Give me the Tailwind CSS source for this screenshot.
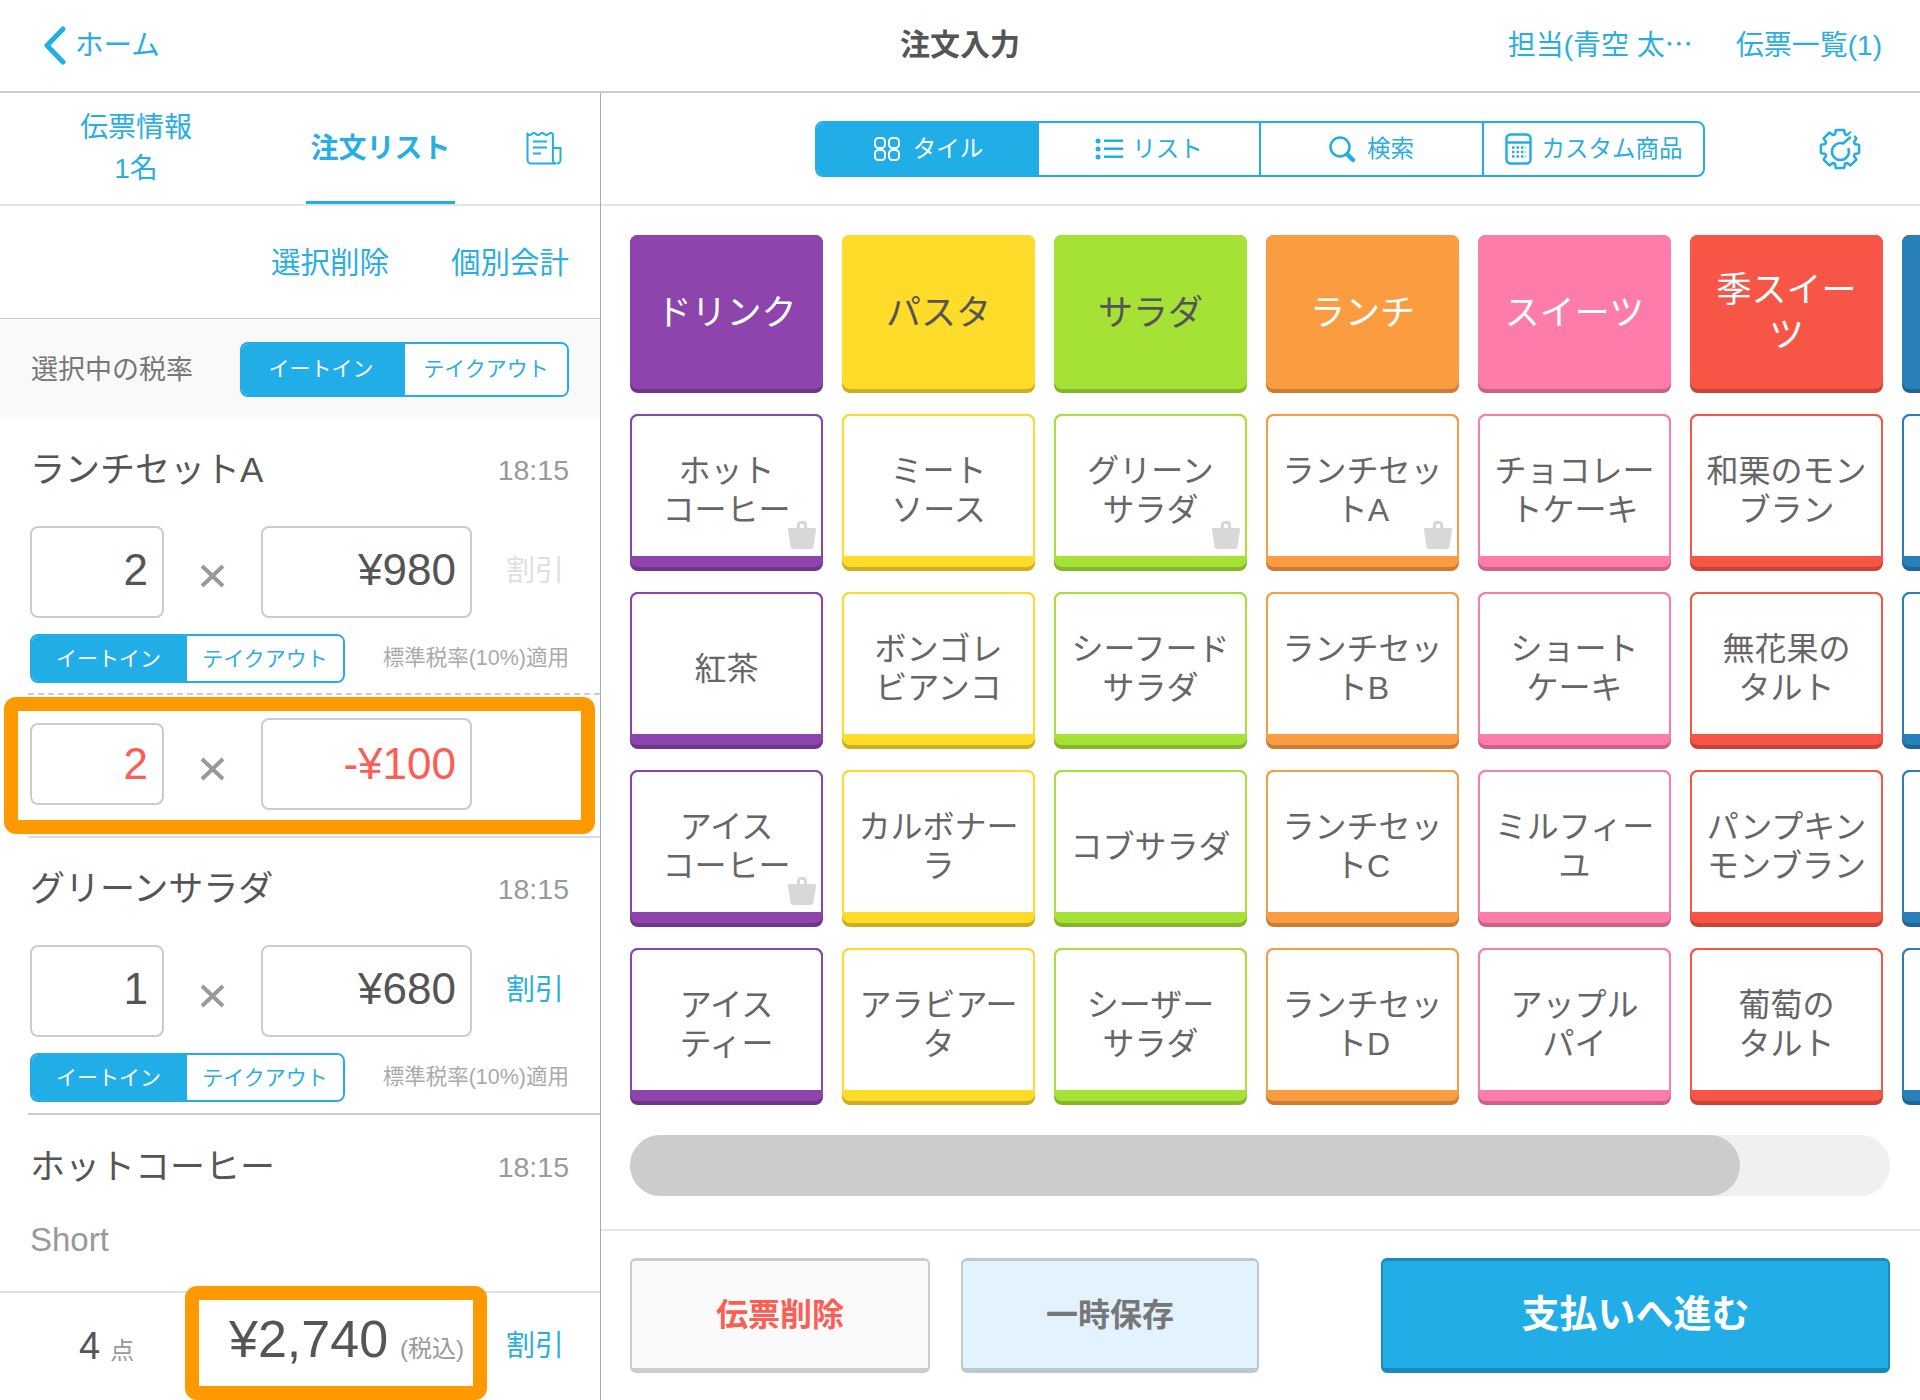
<!DOCTYPE html>
<html lang="ja">
<head>
  <meta charset="UTF-8" />
  <title>注文入力</title>
  <script src="https://cdn.jsdelivr.net/npm/@tailwindcss/browser@4"></script>
</head>
<body class="w-[1920px] h-[1400px] overflow-hidden bg-white text-[#555] font-['Liberation_Sans','Noto_Sans_CJK_JP',sans-serif]">

  <!-- top bar -->
  <header class="h-[93px] border-b-2 border-[#ccc] flex items-center justify-between pl-[44px] pr-[38px] relative text-[#29aee3] text-[28px]">
    <a class="flex items-center gap-[9px] text-[28.500px]">
      <svg class="w-[22px] h-[39px]" viewBox="0 0 22 39" fill="none" stroke="#21aee6" stroke-width="5" stroke-linecap="round" stroke-linejoin="round"><path d="M19 3 3 19.5 19 36"/></svg>
      <span>ホーム</span>
    </a>
    <h1 class="absolute left-[900px] w-[120px] pb-[2px] text-center text-[#555] text-[30px] font-bold whitespace-nowrap">注文入力</h1>
    <div class="flex items-baseline gap-[43px] pb-[2px] whitespace-nowrap">
      <span>担当(青空 太<span class="font-['Noto_Sans_CJK_JP']">…</span></span>
      <span>伝票一覧(1)</span>
    </div>
  </header>

  <div class="flex h-[1307px]">
    <!-- order list -->
    <aside class="w-[601px] shrink-0 border-r border-[#aaa] flex flex-col">
      <div class="h-[113px] shrink-0 border-b-2 border-[#e4e4e4] flex text-[#29aee3] text-[28px]">
        <div class="w-[272px] text-center leading-[41px] pt-[14px]">伝票情報<br>1名</div>
        <div class="ml-[34px] w-[149px] h-[111px] border-b-[3px] border-[#21aee6] flex items-center justify-center font-bold pt-[3px]">注文リスト</div>
        <div class="ml-[71px] pt-[39px]">
          <svg class="w-[36px] h-[33px]" viewBox="0 0 36 33" fill="none" stroke="#21aee6" stroke-width="2"><path d="M1.500 2q2.100 2 4.200 0t4.200 0 4.200 0 4.200 0 4.200 0 4.400 0V28a3.500 3.500 0 0 0 3.500 3.500H5a3.500 3.500 0 0 1-3.500-3.500zM26.700 16H34.500V28a3.500 3.500 0 0 1-3.500 3.500"/><path d="M7 9.500H21M7 15.500H21M7 21.500H15"/></svg>
        </div>
      </div>
      <div class="h-[113px] shrink-0 border-b border-[#ccc] flex items-center justify-end gap-[62px] pr-[31px] pt-[2px] text-[#29aee3] text-[29.500px]">
        <span>選択削除</span>
        <span>個別会計</span>
      </div>
      <div class="h-[98px] shrink-0 bg-[#f9f9f9] flex items-center justify-between pl-[31px] pr-[31px] pt-[2px]">
        <span class="text-[27px] text-[#777] pt-[2px]">選択中の税率</span>
        <div class="w-[329px] h-[55px] flex border-2 border-[#21aee6] rounded-[8px] overflow-hidden text-[21px]">
          <span class="w-[163px] pr-[5px] bg-[#21aee6] text-white flex items-center justify-center">イートイン</span>
          <span class="flex-1 bg-white text-[#29aee3] flex items-center justify-center">テイクアウト</span>
        </div>
      </div>

      <!-- lunch set A -->
      <div class="h-[109px] shrink-0 flex items-center justify-between pl-[30px] pr-[31px] pb-[3px]">
        <span class="text-[35px]">ランチセットA</span>
        <span class="text-[28.500px] text-[#999]">18:15</span>
      </div>
      <div class="h-[92px] shrink-0 flex items-center pl-[30px]">
        <div class="w-[134px] h-[92px] border-2 border-[#ccc] rounded-[8px] flex items-center justify-end pr-[14px] pb-[4px] text-[44px]">2</div>
        <div class="w-[97px] flex justify-center pt-[8px]">
          <svg class="w-[25px] h-[24px]" viewBox="0 0 25 24" stroke="#999" stroke-width="4"><path d="M2 2 23 22M23 2 2 22"/></svg>
        </div>
        <div class="w-[211px] h-[92px] border-2 border-[#ccc] rounded-[8px] flex items-center justify-end pr-[14px] pb-[4px] text-[44px]">¥980</div>
        <span class="ml-[34px] text-[29px] text-[#e0e0e0]">割引</span>
      </div>
      <div class="h-[49px] mt-[16px] shrink-0 flex items-center pl-[30px] pr-[31px] justify-between">
        <div class="w-[315px] h-[49px] flex border-2 border-[#21aee6] rounded-[8px] overflow-hidden text-[21px]">
          <span class="w-[155px] pr-[2px] bg-[#21aee6] text-white flex items-center justify-center">イートイン</span>
          <span class="flex-1 bg-white text-[#29aee3] flex items-center justify-center">テイクアウト</span>
        </div>
        <span class="text-[21.500px] text-[#aaa] whitespace-nowrap">標準税率(10%)適用</span>
      </div>
      <div class="ml-[28px] mt-[10px] shrink-0 border-b-2 border-dashed border-[#ccc]"></div>

      <!-- discount row, highlighted -->
      <div class="h-[143px] shrink-0 relative ml-[28px] border-b-2 border-[#ddd]">
        <div class="flex items-center h-[141px] pl-[2px] pb-[4px]">
          <div class="w-[134px] h-[82px] border-2 border-[#ccc] rounded-[8px] flex items-center justify-end pr-[14px] text-[44px] text-[#fb5e55]">2</div>
          <div class="w-[97px] flex justify-center pt-[10px]">
            <svg class="w-[25px] h-[24px]" viewBox="0 0 25 24" stroke="#999" stroke-width="4"><path d="M2 2 23 22M23 2 2 22"/></svg>
          </div>
          <div class="w-[211px] h-[92px] border-2 border-[#ccc] rounded-[8px] flex items-center justify-end pr-[14px] text-[44px] text-[#fb5e55]">-¥100</div>
        </div>
        <div class="absolute left-[-24px] top-[2px] w-[591px] h-[137px] border-[14px] border-[#ff9900] rounded-[12px]"></div>
      </div>

      <!-- green salad -->
      <div class="h-[107px] shrink-0 flex items-center justify-between pl-[30px] pr-[31px] pb-[4px]">
        <span class="text-[35px]">グリーンサラダ</span>
        <span class="text-[28.500px] text-[#999]">18:15</span>
      </div>
      <div class="h-[92px] shrink-0 flex items-center pl-[30px]">
        <div class="w-[134px] h-[92px] border-2 border-[#ccc] rounded-[8px] flex items-center justify-end pr-[14px] pb-[4px] text-[44px]">1</div>
        <div class="w-[97px] flex justify-center pt-[10px]">
          <svg class="w-[25px] h-[24px]" viewBox="0 0 25 24" stroke="#999" stroke-width="4"><path d="M2 2 23 22M23 2 2 22"/></svg>
        </div>
        <div class="w-[211px] h-[92px] border-2 border-[#ccc] rounded-[8px] flex items-center justify-end pr-[14px] pb-[4px] text-[44px]">¥680</div>
        <span class="ml-[34px] text-[29px] text-[#29aee3]">割引</span>
      </div>
      <div class="h-[49px] mt-[16px] shrink-0 flex items-center pl-[30px] pr-[31px] justify-between">
        <div class="w-[315px] h-[49px] flex border-2 border-[#21aee6] rounded-[8px] overflow-hidden text-[21px]">
          <span class="w-[155px] pr-[2px] bg-[#21aee6] text-white flex items-center justify-center">イートイン</span>
          <span class="flex-1 bg-white text-[#29aee3] flex items-center justify-center">テイクアウト</span>
        </div>
        <span class="text-[21.500px] text-[#aaa] whitespace-nowrap">標準税率(10%)適用</span>
      </div>
      <div class="ml-[28px] mt-[11px] shrink-0 border-b-2 border-[#ccc]"></div>

      <!-- hot coffee -->
      <div class="h-[104px] shrink-0 flex items-center justify-between pl-[30px] pr-[31px]">
        <span class="text-[35px]">ホットコーヒー</span>
        <span class="text-[28.500px] text-[#999]">18:15</span>
      </div>
      <div class="h-[42px] shrink-0 mb-[30px] flex items-center pl-[30px] text-[33px] text-[#999]">Short</div>

      <!-- totals -->
      <div class="h-[109px] shrink-0 border-t-2 border-[#e0e0e0] flex items-center">
        <div class="w-[185px] pl-[79px] flex items-baseline gap-[10px]">
          <span class="text-[38px]">4</span>
          <span class="text-[24px] text-[#999]">点</span>
        </div>
        <div class="w-[302px] h-[114px] -mt-[7px] self-start relative border-[14px] border-[#ff9900] rounded-[12px] bg-white flex items-baseline pl-[30px] whitespace-nowrap">
          <span class="text-[52px]">¥2,740</span>
          <span class="ml-[12px] text-[24px] text-[#999]">(税込)</span>
        </div>
        <span class="ml-[19px] text-[29px] text-[#29aee3]">割引</span>
      </div>
    </aside>

    <!-- products -->
    <main class="flex-1 min-w-0 flex flex-col overflow-hidden">
      <div class="h-[113px] shrink-0 border-b-2 border-[#e4e4e4] flex items-center pl-[214px] pt-[1px]">
        <div class="w-[890px] h-[56px] flex border-2 border-[#21aee6] rounded-[8px] overflow-hidden text-[23.500px] text-[#29aee3]">
          <div class="w-[222px] bg-[#21aee6] text-white flex items-center justify-center gap-[12px]">
            <svg class="w-[28px] h-[26px]" viewBox="0 0 28 26" fill="none" stroke="#fff" stroke-width="2"><rect x="2" y="2" width="10" height="10" rx="3.500"/><rect x="16" y="2" width="10" height="10" rx="3.500"/><rect x="2" y="14" width="10" height="10" rx="3.500"/><rect x="16" y="14" width="10" height="10" rx="3.500"/></svg>
            <span class="pt-[2px]">タイル</span>
          </div>
          <div class="w-[222px] border-r-2 border-[#21aee6] flex items-center justify-center gap-[9px]">
            <svg class="w-[28px] h-[22px]" viewBox="0 0 28 22" fill="#21aee6"><circle cx="3" cy="3" r="2.500"/><circle cx="3" cy="11" r="2.500"/><circle cx="3" cy="19" r="2.500"/><rect x="9" y="1.500" width="19" height="2.500"/><rect x="9" y="9.500" width="19" height="2.500"/><rect x="9" y="17.500" width="19" height="2.500"/></svg>
            <span class="pt-[2px]">リスト</span>
          </div>
          <div class="w-[223px] border-r-2 border-[#21aee6] flex items-center justify-center gap-[11px]">
            <svg class="w-[27px] h-[27px]" viewBox="0 0 27 27" fill="none" stroke="#21aee6"><circle cx="11" cy="11" r="9.500" stroke-width="2.500"/><path d="M18.500 18.500 24 24" stroke-width="4.500" stroke-linecap="round"/></svg>
            <span class="pt-[2px]">検索</span>
          </div>
          <div class="flex-1 flex items-center justify-center gap-[10px] whitespace-nowrap">
            <svg class="w-[27px] h-[32px]" viewBox="0 0 27 32" fill="none"><rect x="1.500" y="1.500" width="24" height="29" rx="4" stroke="#21aee6" stroke-width="2.500"/><path d="M1.500 9.500H25.500" stroke="#21aee6" stroke-width="2.500"/><path d="M7 14.500H21M7 19H21M7 23.500H21" stroke="#21aee6" stroke-width="2.500" stroke-dasharray="2.500 2"/></svg>
            <span class="pt-[2px]">カスタム商品</span>
          </div>
        </div>
        <svg class="ml-[114px] w-[42px] h-[42px]" viewBox="0 0 42 42" fill="none" stroke="#21aee6" stroke-width="2.500" stroke-linecap="round" stroke-linejoin="round">
          <path id="gear" d=""/>
          <path d="M33 7 29 14" stroke="#fff" stroke-width="5"/>
          <path d="M24 15.500A8.500 8.500 0 1 0 29.500 21M24 15.500 31 9.500"/>
        </svg>
      </div>

      <div class="flex-1 min-h-0 pl-[29px]">
        <div id="tiles" class="grid grid-cols-[repeat(7,193px)] grid-rows-[158px_repeat(4,157px)] gap-x-[19px] gap-y-[21px] pt-[29px]"></div>
        <div class="w-[1260px] h-[61px] mt-[30px] bg-[#f0f0f0] rounded-full">
          <div class="w-[1110px] h-[61px] bg-[#ccc] rounded-full"></div>
        </div>
      </div>

      <div class="h-[171px] shrink-0 border-t-2 border-[#e4e4e4] flex pl-[29px] pt-[27px] text-[32px] font-bold">
        <button class="w-[300px] h-[115px] bg-[#fafafa] border-2 border-t-[3px] border-b-[5px] border-[#ccc] rounded-[6px] text-[#fb5e55]">伝票削除</button>
        <button class="ml-[31px] w-[298px] h-[115px] bg-[#e3f3fd] border-2 border-t-[3px] border-b-[5px] border-[#bcc9d4] rounded-[6px] text-[#777]">一時保存</button>
        <button class="ml-[122px] w-[509px] h-[115px] bg-[#21aee6] border-2 border-t-[3px] border-b-[5px] border-[#1c8ab8] rounded-[6px] text-white text-[38px]">支払いへ進む</button>
      </div>
    </main>
  </div>

  <script>
    // one entry per column: category first, then its products
    const columns = [
      { cat: 'bg-[#8e44ad] text-white', border: 'border-[#8e44ad]', dark: 'bg-[#6f3589]', name: 'ドリンク',
        items: [['ホット<br>コーヒー', true], ['紅茶'], ['アイス<br>コーヒー', true], ['アイス<br>ティー']] },
      { cat: 'bg-[#ffdb2a] text-[#555]', border: 'border-[#ffdb2a]', dark: 'bg-[#ccaf22]', name: 'パスタ',
        items: [['ミート<br>ソース'], ['ボンゴレ<br>ビアンコ'], ['カルボナー<br>ラ'], ['アラビアー<br>タ']] },
      { cat: 'bg-[#a6e236] text-[#555]', border: 'border-[#a6e236]', dark: 'bg-[#85b52b]', name: 'サラダ',
        items: [['グリーン<br>サラダ', true], ['シーフード<br>サラダ'], ['コブサラダ'], ['シーザー<br>サラダ']] },
      { cat: 'bg-[#fb9c41] text-white', border: 'border-[#fb9c41]', dark: 'bg-[#c97d34]', name: 'ランチ',
        items: [['ランチセッ<br>トA', true], ['ランチセッ<br>トB'], ['ランチセッ<br>トC'], ['ランチセッ<br>トD']] },
      { cat: 'bg-[#fd7ca9] text-white', border: 'border-[#fd7ca9]', dark: 'bg-[#ca6387]', name: 'スイーツ',
        items: [['チョコレー<br>トケーキ'], ['ショート<br>ケーキ'], ['ミルフィー<br>ユ'], ['アップル<br>パイ']] },
      { cat: 'bg-[#f75646] text-white', border: 'border-[#f75646]', dark: 'bg-[#c64538]', name: '季スイー<br>ツ',
        items: [['和栗のモン<br>ブラン'], ['無花果の<br>タルト'], ['パンプキン<br>モンブラン'], ['葡萄の<br>タルト']] },
      { cat: 'bg-[#2980b9] text-white', border: 'border-[#2980b9]', dark: 'bg-[#206694]', name: '',
        items: [[''], [''], [''], ['']] }
    ];

    const bag = `<svg class="absolute right-[7px] bottom-[22px] w-[28px] h-[29px]" viewBox="0 0 28 29" fill="#d8d8d8"><path d="M9 9V5a4 4 0 0 1 4-4h2a4 4 0 0 1 4 4v4h-3V5a1 1 0 0 0-1-1h-2a1 1 0 0 0-1 1v4z"/><path d="M2 8h24a2 2 0 0 1 2 2.300L25.500 26a3 3 0 0 1-3 3h-17a3 3 0 0 1-3-3L0 10.300A2 2 0 0 1 2 8z"/></svg>`;

    const tiles = document.getElementById('tiles');
    tiles.style.gridAutoFlow = 'column';
    tiles.innerHTML = columns.map(col => `
      <div class="${col.dark} rounded-[8px] pb-[4px]">
        <div class="${col.cat} h-full rounded-[8px] flex items-center justify-center text-center text-[35px] leading-[45px]">${col.name}</div>
      </div>
      ${col.items.map(([label, takeout]) => `
        <div class="${col.dark} relative rounded-[8px] pb-[4px]">
          <div class="${col.border} h-full bg-white border-2 border-b-[11px] rounded-[8px] flex items-center justify-center text-center text-[#666] text-[32px] leading-[39px] pt-[10px]">${label}</div>
          ${takeout ? bag : ''}
        </div>`).join('')}
    `).join('');

    // 8 tooth gear outline
    const pts = [];
    for (let i = 0; i < 8; i++) {
      const a = i * 45 - 90;
      [[-12, 19.5], [12, 19.5], [19, 15.5], [26, 15.5]].forEach(([o, r]) => {
        pts.push((21 + r * Math.cos((a + o) * Math.PI / 180)).toFixed(1) + ' ' + (21 + r * Math.sin((a + o) * Math.PI / 180)).toFixed(1));
      });
    }
    document.getElementById('gear').setAttribute('d', 'M' + pts.join('L') + 'Z');
  </script>
</body>
</html>
